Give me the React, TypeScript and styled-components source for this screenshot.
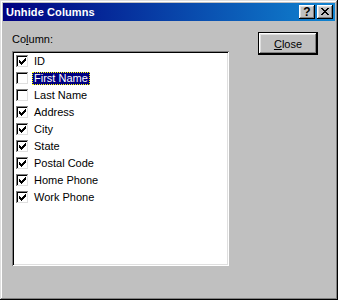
import styled, { createGlobalStyle } from "styled-components";

const GlobalStyle = createGlobalStyle`
  html, body {
    margin: 0;
    padding: 0;
    background: #c0c0c0;
  }
  body {
    font-family: "Liberation Sans", Arial, sans-serif;
    font-size: 11px;
  }
`;

const Window = styled.div`
  width: 338px;
  height: 300px;
  box-sizing: border-box;
  padding: 3px;
  background: #c0c0c0;
  box-shadow: inset -1px -1px #000, inset 1px 1px #dfdfdf, inset -2px -2px #808080,
    inset 2px 2px #fff;
  display: flex;
  flex-direction: column;
`;

const TitleBar = styled.div`
  height: 18px;
  display: flex;
  align-items: center;
  padding: 0 2px 0 3px;
  background: linear-gradient(90deg, #000080, #1084d0);
`;

const Title = styled.span`
  flex: 1;
  color: #fff;
  font-weight: bold;
  font-size: 11px;
  letter-spacing: 0.1px;
`;

const CaptionButtons = styled.div`
  display: flex;
  gap: 2px;
`;

const CaptionButton = styled.div`
  width: 16px;
  height: 14px;
  box-sizing: border-box;
  background: #c0c0c0;
  box-shadow: inset -1px -1px #000, inset 1px 1px #fff, inset -2px -2px #808080,
    inset 2px 2px #dfdfdf;
  display: flex;
  align-items: center;
  justify-content: center;
  font-weight: bold;
  font-size: 12px;
  line-height: 14px;
  color: #000;
  padding-bottom: 1px;
`;

const Body = styled.div`
  display: flex;
  padding: 11px 0 0 9px;
`;

const LeftColumn = styled.div`
  display: flex;
  flex-direction: column;
`;

const FieldLabel = styled.div`
  margin-top: 1px;
  margin-bottom: 5px;
  height: 13px;
  line-height: 13px;
  color: #000;
`;

const ListBox = styled.div`
  width: 217px;
  height: 215px;
  box-sizing: border-box;
  padding: 2px;
  background: #fff;
  box-shadow: inset 1px 1px #808080, inset -1px -1px #fff, inset 2px 2px #000,
    inset -2px -2px #dfdfdf;
`;

const Row = styled.div`
  height: 17px;
  display: flex;
  align-items: center;
  gap: 3px;
  padding-left: 2px;
`;

const CheckBox = styled.div`
  width: 13px;
  height: 13px;
  box-sizing: border-box;
  background: #fff;
  box-shadow: inset -1px -1px #fff, inset 1px 1px #808080, inset -2px -2px #dfdfdf,
    inset 2px 2px #000;
  display: flex;
  align-items: center;
  justify-content: center;
`;

const ItemText = styled.span<{ $selected: boolean }>`
  height: 13px;
  line-height: 11px;
  box-sizing: border-box;
  padding: 0 1px;
  border: 1px dotted ${({ $selected }) => ($selected ? "#ffff00" : "transparent")};
  background: ${({ $selected }) => ($selected ? "#000080" : "transparent")};
  color: ${({ $selected }) => ($selected ? "#fff" : "#000")};
  white-space: nowrap;
`;

const RightColumn = styled.div`
  margin-left: 29px;
`;

const DefaultButton = styled.button`
  width: 60px;
  height: 23px;
  box-sizing: border-box;
  border: 1px solid #000;
  background: #c0c0c0;
  box-shadow: inset -1px -1px #000, inset 1px 1px #fff, inset -2px -2px #808080,
    inset 2px 2px #dfdfdf;
  font-family: "Liberation Sans", Arial, sans-serif;
  font-size: 11px;
  color: #000;
  padding: 0;
`;

const checkPixels = [
  "......X",
  ".....XX",
  "X...XXX",
  "XX.XXX.",
  "XXXXX..",
  ".XXX...",
  "..X....",
];

const closePixels = [
  "XX....XX",
  ".XX..XX.",
  "..XXXX..",
  "...XX...",
  "..XXXX..",
  ".XX..XX.",
  "XX....XX",
];

function PixelGlyph({ pixels }: { pixels: string[] }) {
  const w = pixels[0].length;
  const h = pixels.length;
  return (
    <svg width={w} height={h} viewBox={`0 0 ${w} ${h}`} shapeRendering="crispEdges">
      {pixels.flatMap((line, y) =>
        line.split("").map((c, x) =>
          c === "X" ? <rect key={`${x}-${y}`} x={x} y={y} width={1} height={1} fill="#000" /> : null,
        ),
      )}
    </svg>
  );
}

const columns = [
  { name: "ID", visible: true },
  { name: "First Name", visible: false, selected: true },
  { name: "Last Name", visible: false },
  { name: "Address", visible: true },
  { name: "City", visible: true },
  { name: "State", visible: true },
  { name: "Postal Code", visible: true },
  { name: "Home Phone", visible: true },
  { name: "Work Phone", visible: true },
];

export default function App() {
  return (
    <>
      <GlobalStyle />
      <Window>
        <TitleBar>
          <Title>Unhide Columns</Title>
          <CaptionButtons>
            <CaptionButton>?</CaptionButton>
            <CaptionButton>
              <PixelGlyph pixels={closePixels} />
            </CaptionButton>
          </CaptionButtons>
        </TitleBar>
        <Body>
          <LeftColumn>
            <FieldLabel>
              Co<u>l</u>umn:
            </FieldLabel>
            <ListBox>
              {columns.map((col) => (
                <Row key={col.name}>
                  <CheckBox>{col.visible && <PixelGlyph pixels={checkPixels} />}</CheckBox>
                  <ItemText $selected={!!col.selected}>{col.name}</ItemText>
                </Row>
              ))}
            </ListBox>
          </LeftColumn>
          <RightColumn>
            <DefaultButton type="button">
              <u>C</u>lose
            </DefaultButton>
          </RightColumn>
        </Body>
      </Window>
    </>
  );
}
